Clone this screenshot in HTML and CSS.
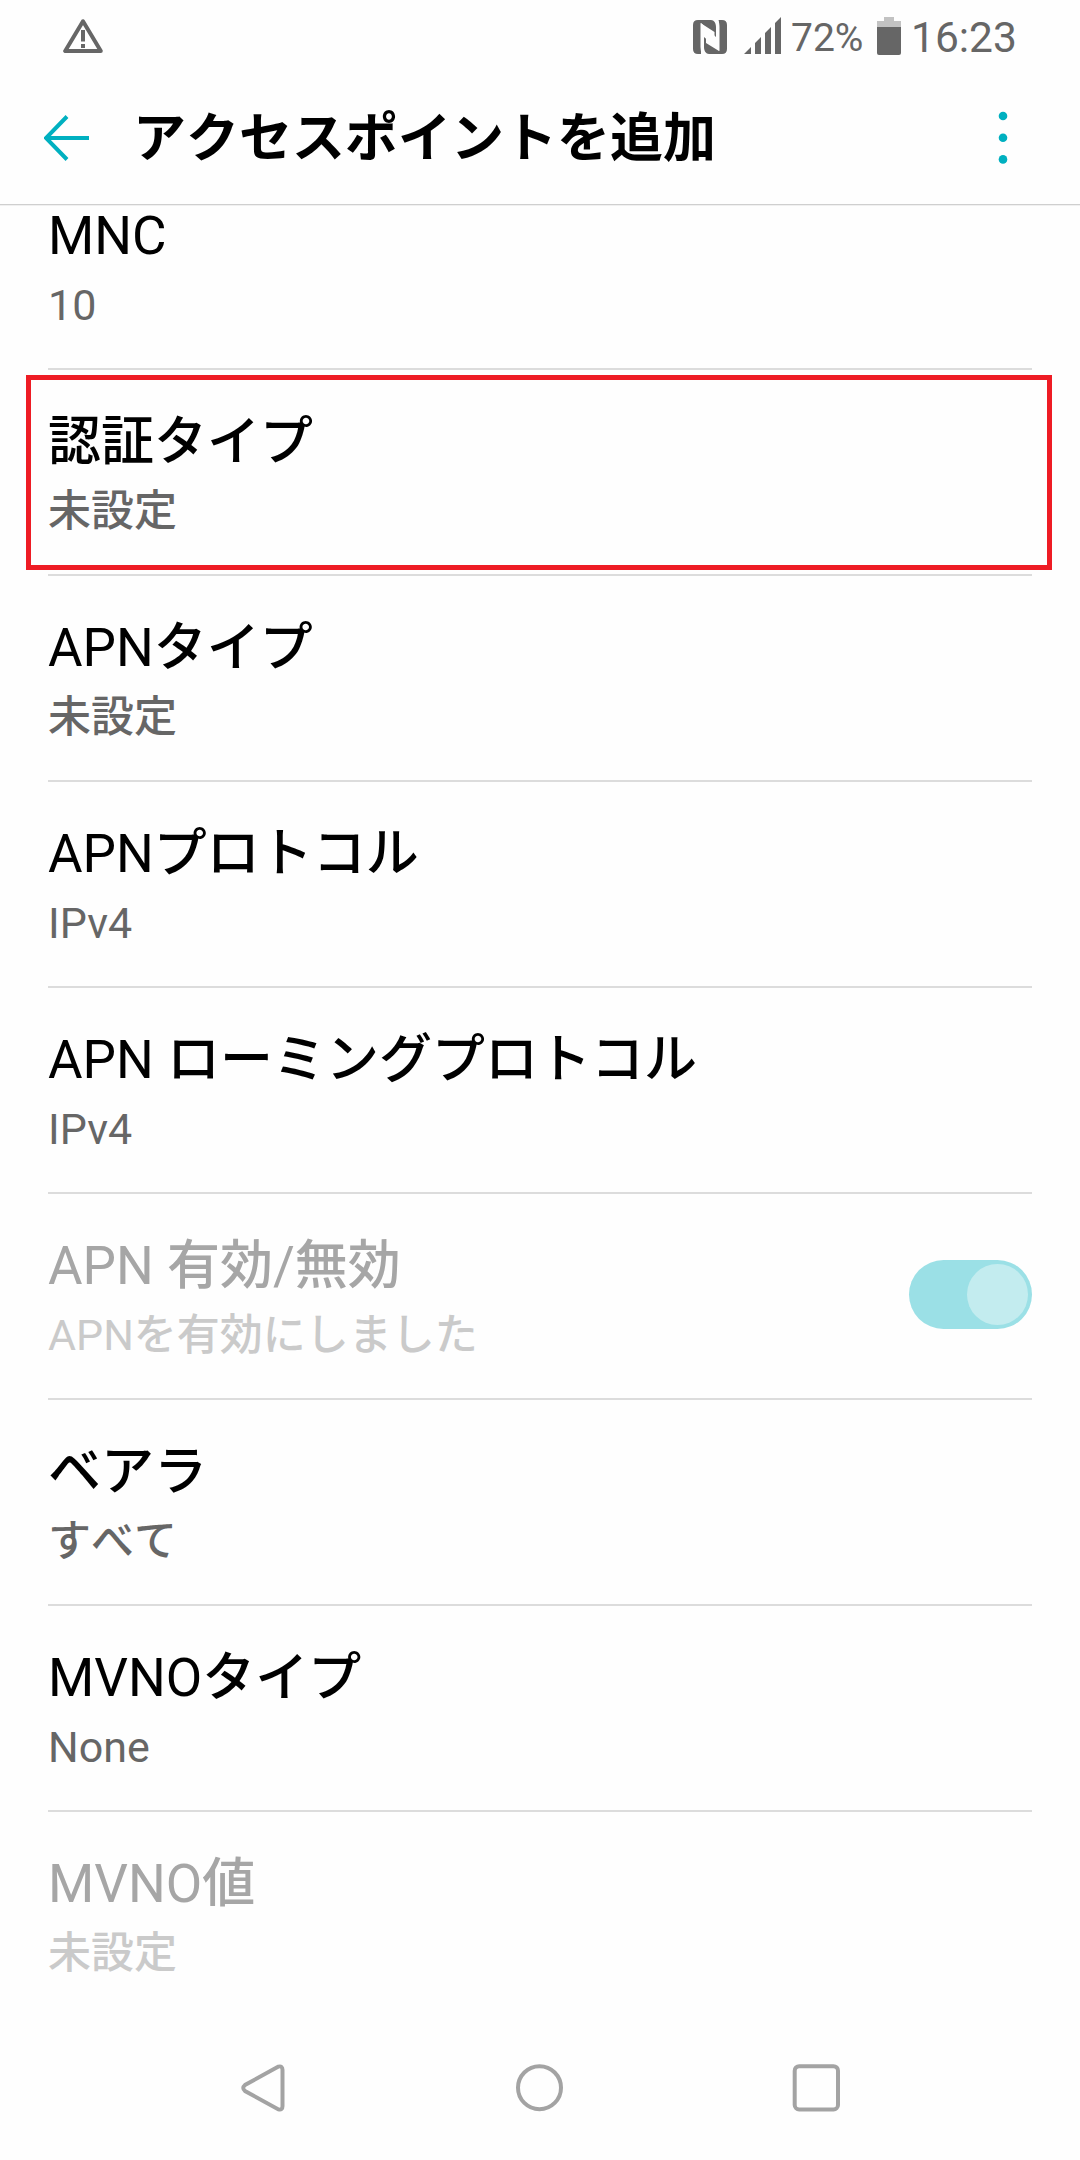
FILE: index.html
```html
<!DOCTYPE html>
<html lang="ja">
<head>
<meta charset="utf-8">
<title>アクセスポイントを追加</title>
<link rel="stylesheet" href="styles.css">
</head>
<body>
<div class="screen">
  <div class="status">
    <svg class="warn" width="40" height="34" viewBox="0 0 40 34" fill="none" stroke="#666" stroke-width="4" stroke-linejoin="round"><path d="M20 2.300 2.200 32H37.800Z"/><path d="M20 11V22.500M20 25V29"/></svg>
    <svg class="nfc" width="34" height="34" viewBox="0 0 34 34"><path fill="#666" d="M5 0H18C21 0 23 3 23 7V17L8 3V34H5Q0 34 0 29V5Q0 0 5 0ZM25.500 0H29Q34 0 34 5V29Q34 34 29 34H16C13 34 11 31 11 27V17L26.500 31V7C26.500 4 26 2 25.500 0Z"/><path fill="#fefefe" d="M7.500 3 21.500 12V17L11 11V25C11 29 9 31 9 34Q7.500 31 7.500 27ZM26 31 13 23V18L23 23V7C23 3 24.500 1 25 0Q26 2 26 7Z"/></svg>
    <svg class="signal" width="38" height="37" viewBox="0 0 38 37" fill="#666"><path d="M0 37 7 30V37ZM11 26 17 20V37H11ZM21 16 27 10V37H21ZM31 6 37 0V37H31Z"/></svg>
    <span class="percent">72%</span>
    <svg class="battery" width="24" height="38" viewBox="0 0 24 38"><path fill="#c2c2c2" d="M7 0H17V4H24V10H0V4H7Z"/><path fill="#666" d="M0 10H24V36Q24 38 22 38H2Q0 38 0 36Z"/></svg>
    <span class="clock">16:23</span>
  </div>
  <header class="appbar">
    <svg class="back" width="46" height="46" viewBox="0 0 46 46" fill="none" stroke="#00b0c0" stroke-width="4"><path d="M23 1.500 2 23 23 44.500M2 23H45"/></svg>
    <h1>アクセスポイントを追加</h1>
    <svg class="more" width="10" height="54" viewBox="0 0 10 54" fill="#00b0c0"><circle cx="5" cy="5" r="4.300"/><circle cx="5" cy="26.700" r="4.300"/><circle cx="5" cy="48.400" r="4.300"/></svg>
  </header>
  <main class="list">
    <div class="row first"><div><div class="name">MNC</div><div class="value">10</div></div></div>
    <div class="row"><div><div class="name"><span class="ja">認証タイプ</span></div><div class="value"><span class="ja">未設定</span></div></div><div class="highlight"></div></div>
    <div class="row"><div><div class="name">APN<span class="ja">タイプ</span></div><div class="value"><span class="ja">未設定</span></div></div></div>
    <div class="row"><div><div class="name">APN<span class="ja">プロトコル</span></div><div class="value">IPv4</div></div></div>
    <div class="row"><div><div class="name">APN <span class="ja">ローミングプロトコル</span></div><div class="value">IPv4</div></div></div>
    <div class="row disabled"><div><div class="name">APN <span class="ja">有効</span>/<span class="ja">無効</span></div><div class="value">APN<span class="ja">を有効にしました</span></div></div><div class="toggle"><div class="thumb"></div></div></div>
    <div class="row"><div><div class="name"><span class="ja">ベアラ</span></div><div class="value"><span class="ja">すべて</span></div></div></div>
    <div class="row"><div><div class="name">MVNO<span class="ja">タイプ</span></div><div class="value">None</div></div></div>
    <div class="row disabled last"><div><div class="name">MVNO<span class="ja">値</span></div><div class="value"><span class="ja">未設定</span></div></div></div>
  </main>
  <nav class="navbar">
    <svg width="48" height="48" viewBox="0 0 48 48"><path d="M38.500 2.600 5 21Q1.500 24 5 27L38.500 45.400Q42.500 46.500 42.500 42V6Q42.500 1.500 38.500 2.600Z"/></svg>
    <svg width="48" height="48" viewBox="0 0 48 48"><circle cx="23.500" cy="23.700" r="21.500"/></svg>
    <svg width="48" height="48" viewBox="0 0 48 48"><rect x="2.700" y="2.200" width="43.300" height="43.300" rx="4.500"/></svg>
  </nav>
</div>
</body>
</html>
```
FILE: styles.css
```css
body {
  margin: 0;
  background: #fefefe;
  font-family: Roboto, "Noto Sans CJK JP", sans-serif;
}
.screen {
  width: 1080px;
  height: 2160px;
  display: flex;
  flex-direction: column;
  overflow: hidden;
}
.status {
  box-sizing: border-box;
  height: 72px;
  flex: none;
  display: flex;
  align-items: flex-start;
  padding-left: 63px;
  color: #666;
  white-space: nowrap;
}
.warn { margin-top: 19px; }
.nfc { margin: 20px 0 0 590px; }
.signal { margin: 17px 0 0 17px; }
.percent {
  width: 72px;
  margin: 14px 0 0 9px;
  font-size: 39px;
  line-height: 48px;
}
.battery { margin: 17px 0 0 14px; }
.clock {
  margin: 14px 0 0 10px;
  font-size: 42.500px;
  line-height: 48px;
}
.appbar {
  box-sizing: border-box;
  height: 134px;
  flex: none;
  display: flex;
  align-items: center;
  padding: 0 72px 2px 44px;
  border-bottom: 1px solid #f0f0f0;
  box-shadow: inset 0 -1px #cfcfcf;
}
h1 {
  flex: 1;
  margin: 2px 0 0 43px;
  font-size: 53px;
  line-height: 64px;
  font-weight: 700;
  font-kerning: none;
}
.list {
  height: 1810px;
  flex: none;
}
.row {
  position: relative;
  box-sizing: border-box;
  height: 206px;
  margin: 0 48px;
  padding-top: 40px;
  border-bottom: 2px solid #dcdcdc;
  display: flex;
  justify-content: space-between;
  white-space: nowrap;
}
.first {
  height: 166px;
  margin-top: -2px;
  padding-top: 0;
}
.last { border-bottom: 0; }
.name {
  font-size: 53px;
  line-height: 64px;
  color: #000;
}
.value {
  margin-top: 11px;
  font-size: 43px;
  line-height: 52px;
  color: #666;
}
.ja {
  font-weight: 500;
  font-kerning: none;
}
.disabled .name { color: #a6a6a6; }
.disabled .value { color: #cacaca; }
.highlight {
  position: absolute;
  box-sizing: border-box;
  left: -22px;
  top: 5px;
  width: 1026px;
  height: 195px;
  border: 5px solid #ee1c24;
}
.toggle {
  box-sizing: border-box;
  width: 123px;
  height: 69px;
  margin-top: 26px;
  padding: 4px;
  border-radius: 35px;
  background: #9be0e6;
  display: flex;
  justify-content: flex-end;
}
.thumb {
  width: 61px;
  height: 61px;
  border-radius: 50%;
  background: #c3ecef;
}
.navbar {
  flex: 1;
  display: flex;
  justify-content: space-between;
  align-items: flex-start;
  padding: 48px 240px 0 240px;
}
.navbar svg {
  fill: none;
  stroke: #a3a3a3;
  stroke-width: 4;
}
```
